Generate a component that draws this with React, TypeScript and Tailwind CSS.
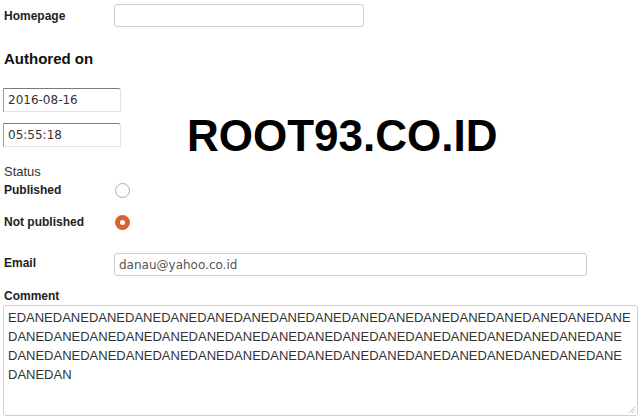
import React from "react";

const commentLines = [
  "E" + "DANE".repeat(17),
  "DANE".repeat(17),
  "DANE".repeat(17),
  "DANEDAN",
];

const App = () => {
  return (
    <div className="relative w-[640px] h-[416px] overflow-hidden bg-white font-['Liberation_Sans',Arial,sans-serif] text-[#222]">
      {/* Homepage */}
      <div className="flex items-center pt-[4px] pl-[4px]">
        <label className="w-[110px] text-[12px] font-bold leading-[14px]">Homepage</label>
        <input
          type="text"
          className="w-[250px] h-[23px] border border-[#cfcfcf] rounded-[3px] outline-none"
        />
      </div>

      {/* Authored on */}
      <h2 className="mt-[22px] pl-[4px] text-[15px] leading-[20px] font-bold text-[#111]">
        Authored on
      </h2>
      <div className="ml-[3px] mt-[19px] w-[118px] h-[24px] border border-[#e2e2e2] border-t-[#7a7a7a] border-l-[#9a9a9a] rounded-tr-[3px] pl-[4px] flex items-center font-['DejaVu_Sans',sans-serif] text-[12px] text-[#333]">
        2016-08-16
      </div>
      <div className="ml-[3px] mt-[11px] w-[118px] h-[24px] border border-[#e2e2e2] border-t-[#7a7a7a] border-l-[#9a9a9a] rounded-tr-[3px] pl-[4px] flex items-center font-['DejaVu_Sans',sans-serif] text-[12px] text-[#333]">
        05:55:18
      </div>

      {/* Status */}
      <div className="mt-[17px] pl-[4px] text-[13px] leading-[16px] text-[#333]">Status</div>
      <div className="mt-[2px] flex items-center h-[16px] pl-[4px]">
        <span className="w-[111px] text-[12px] font-bold">Published</span>
        <span className="w-[15px] h-[15px] rounded-full border border-[#aaa] bg-white" />
      </div>
      <div className="mt-[16px] flex items-center h-[16px] pl-[4px]">
        <span className="w-[111px] text-[12px] font-bold">Not published</span>
        <span className="w-[15px] h-[15px] rounded-full bg-[#d8612f] flex items-center justify-center">
          <span className="w-[5px] h-[5px] rounded-full bg-white" />
        </span>
      </div>

      {/* Email */}
      <div className="mt-[23px] flex items-start pl-[4px]">
        <label className="w-[110px] pt-[3px] text-[12px] font-bold leading-[14px]">Email</label>
        <div className="w-[473px] h-[23px] border border-[#cfcfcf] rounded-[3px] pl-[4px] flex items-center font-['DejaVu_Sans',sans-serif] text-[12px] text-[#555]">
          danau@yahoo.co.id
        </div>
      </div>

      {/* Comment */}
      <div className="mt-[13px] pl-[4px] text-[12px] font-bold leading-[14px]">Comment</div>
      <div className="relative ml-[3px] mt-[2px] w-[635px] h-[111px] border border-[#cfcfcf] rounded-[3px] pl-[4px] pt-[2px] text-[13px] leading-[19px] text-[#333]">
        {commentLines.map((line, i) => (
          <div key={i} className="whitespace-nowrap">
            {line}
          </div>
        ))}
        <svg className="absolute right-[1px] bottom-[1px]" width="8" height="8" viewBox="0 0 8 8">
          <path d="M7 1L1 7M7 4L4 7" stroke="#bbb" strokeWidth="1" />
        </svg>
      </div>

      {/* watermark */}
      <div className="absolute left-[187px] top-[112px] text-[44px] leading-[48px] font-bold text-black">
        ROOT93.CO.ID
      </div>
    </div>
  );
};

export default App;
